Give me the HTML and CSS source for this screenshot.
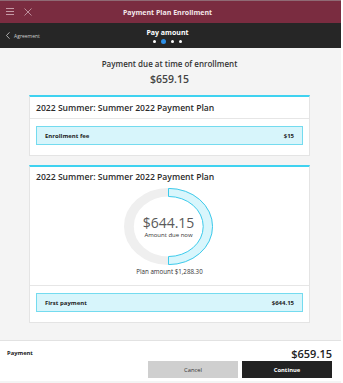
FILE: index.html
```html
<!DOCTYPE html>
<html lang="en">

<head>
  <meta charset="UTF-8">
  <meta name="viewport" content="width=device-width, initial-scale=1.0">
  <title>Payment Plan Enrollment</title>
  <link rel="stylesheet" href="styles.css">
</head>

<body>
  <div class="app">
    <header class="topbar">
      <div class="topbar-icons">
        <svg class="icon" width="8" height="7" viewBox="0 0 8 7">
          <path d="M0 0.5H8M0 3.5H8M0 6.5H8" stroke="currentColor" stroke-width="1" />
        </svg>
        <svg class="icon" width="8" height="8" viewBox="0 0 8 8">
          <path d="M0.5 0.5L7.5 7.5M7.5 0.5L0.5 7.5" stroke="currentColor" stroke-width="0.9" />
        </svg>
      </div>
      <h1>Payment Plan Enrollment</h1>
    </header>

    <nav class="stepbar">
      <a class="back" href="#">
        <svg width="4" height="7" viewBox="0 0 4 7">
          <path d="M3.5 0.3L0.5 3.5L3.5 6.7" fill="none" stroke="currentColor" stroke-width="0.8" />
        </svg>
        Agreement
      </a>
      <div class="step">
        <span class="step-name">Pay amount</span>
        <span class="dots">
          <i></i><i class="active"></i><i></i><i></i>
        </span>
      </div>
    </nav>

    <main class="content">
      <p class="due-label">Payment due at time of enrollment</p>
      <p class="due-amount">$659.15</p>

      <section class="card">
        <h2 class="card-title with-rule">2022 Summer: Summer 2022 Payment Plan</h2>
        <div class="card-body">
          <div class="line-item">
            <span>Enrollment fee</span>
            <span>$15</span>
          </div>
        </div>
      </section>

      <section class="card">
        <h2 class="card-title">2022 Summer: Summer 2022 Payment Plan</h2>
        <div class="plan">
          <div class="donut">
            <svg class="ring" width="89" height="77" viewBox="0 0 100 100" preserveAspectRatio="none">
              <circle cx="50" cy="50" r="44.5" fill="none" stroke="#efefef" stroke-width="11" />
              <path d="M50 0.5A49.5 49.5 0 0 1 50 99.5L50 89A39 39 0 0 0 50 11Z" fill="#d9f6fc" stroke="#3ccbec" stroke-width="1" vector-effect="non-scaling-stroke" />
            </svg>
            <div class="donut-text">
              <span class="donut-value">$644.15</span>
              <span class="donut-label">Amount due now</span>
            </div>
          </div>
          <p class="plan-total">Plan amount $1,288.30</p>
        </div>
        <div class="card-body ruled">
          <div class="line-item">
            <span>First payment</span>
            <span>$644.15</span>
          </div>
        </div>
      </section>
    </main>

    <footer class="summary">
      <div class="summary-row">
        <span class="summary-label">Payment</span>
        <span class="summary-total">$659.15</span>
      </div>
      <div class="actions">
        <button class="btn cancel" type="button">Cancel</button>
        <button class="btn continue" type="button">Continue</button>
      </div>
    </footer>
  </div>
</body>

</html>
```

FILE: styles.css
```css
* {
  box-sizing: border-box;
}

body {
  margin: 0;
  background: #fff;
  font-family: "Open Sans", "Noto Sans", sans-serif;
  color: #222;
}

p,
h1,
h2 {
  margin: 0;
}

.app {
  width: 341px;
  height: 383px;
  display: flex;
  flex-direction: column;
  background: #f4f4f4;
}

/* top bars */
.topbar {
  height: 23px;
  display: flex;
  align-items: center;
  background: #7a2c40;
  border-top: 1px solid #8f6a74;
  padding: 0 6px;
}

.topbar-icons {
  display: flex;
  gap: 10px;
  color: #c49aa6;
  width: 60px;
}

.topbar h1 {
  flex: 1;
  margin-right: 66px;
  text-align: center;
  font-size: 7px;
  font-weight: 700;
  color: #f3e6ea;
}

.stepbar {
  height: 25px;
  display: flex;
  align-items: center;
  background: #262626;
  padding: 0 6px;
}

.back {
  width: 60px;
  display: flex;
  align-items: center;
  gap: 4px;
  font-size: 5px;
  color: #cfcfcf;
  text-decoration: none;
}

.step {
  flex: 1;
  margin-right: 66px;
  display: flex;
  flex-direction: column;
  align-items: center;
  gap: 2px;
}

.step-name {
  font-size: 7px;
  font-weight: 700;
  color: #fff;
  line-height: 9px;
}

.dots {
  display: flex;
  align-items: center;
  gap: 5px;
}

.dots i {
  width: 3px;
  height: 3px;
  border-radius: 50%;
  background: #fff;
}

.dots i.active {
  width: 5px;
  height: 5px;
  background: #2d8fe6;
}

/* content */
.content {
  flex: 1;
  padding: 10px 31px 0 29px;
  display: flex;
  flex-direction: column;
  gap: 9px;
}

.due-label {
  text-align: center;
  font-size: 8px;
  font-weight: 600;
  line-height: 12px;
  color: #333;
}

.due-amount {
  margin-top: -7px;
  margin-bottom: 0;
  text-align: center;
  font-size: 10.5px;
  font-weight: 600;
  line-height: 14px;
  color: #444;
}

.card {
  background: #fff;
  border: 1px solid #e4e4e4;
  border-top: 2px solid #3fd2f0;
}

.card-title {
  font-size: 8.6px;
  font-weight: 600;
  color: #2b2b2b;
  line-height: 12px;
  padding: 4px 6px 0;
}

.card-title.with-rule {
  height: 22px;
  padding-top: 5px;
  border-bottom: 1px solid #e6e6e6;
}

.card-body {
  padding: 7px 6px 10px 6px;
}

.card-body.ruled {
  border-top: 1px solid #e6e6e6;
}

.line-item {
  height: 19px;
  display: flex;
  align-items: center;
  justify-content: space-between;
  padding: 0 8px;
  background: #d7f5fb;
  border: 1px solid #74dbef;
  font-size: 6px;
  font-weight: 700;
  color: #1e1e1e;
}

.plan {
  display: flex;
  flex-direction: column;
  align-items: center;
  padding: 5px 0 8px;
}

.donut {
  display: grid;
  place-items: center;
  margin-left: -2px;
}

.ring,
.donut-text {
  grid-area: 1 / 1;
}

.donut-text {
  display: flex;
  flex-direction: column;
  align-items: center;
  margin-top: 1px;
}

.donut-value {
  font-size: 14px;
  line-height: 16px;
  color: #5a5a5a;
}

.donut-label {
  font-size: 6px;
  line-height: 8px;
  color: #333;
}

.plan-total {
  margin-top: 2px;
  font-size: 6.2px;
  line-height: 10px;
  color: #333;
}

/* footer */
.summary {
  height: 41px;
  margin-bottom: 2px;
  background: #fff;
  border-top: 1px solid #e2e2e2;
  padding: 5px 9px 0 7px;
}

.summary-row {
  display: flex;
  align-items: center;
  justify-content: space-between;
  height: 14px;
}

.summary-label {
  font-size: 5.8px;
  font-weight: 700;
  color: #222;
}

.summary-total {
  font-size: 11px;
  font-weight: 600;
  color: #222;
}

.actions {
  display: flex;
  justify-content: flex-end;
  gap: 4px;
  margin-top: 1px;
}

.btn {
  width: 90px;
  height: 17px;
  border: 0;
  font-family: inherit;
  font-size: 5.8px;
  cursor: pointer;
}

.cancel {
  background: #cfcfcf;
  color: #333;
}

.continue {
  background: #222;
  color: #fff;
  font-weight: 700;
}
```
